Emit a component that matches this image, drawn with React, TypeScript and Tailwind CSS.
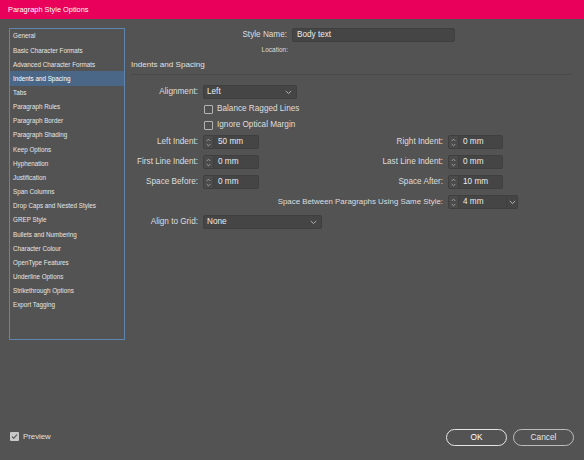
import React from "react";

const FONT = { fontFamily: '"Liberation Sans", Arial, sans-serif' };

const items = [
  "General",
  "Basic Character Formats",
  "Advanced Character Formats",
  "Indents and Spacing",
  "Tabs",
  "Paragraph Rules",
  "Paragraph Border",
  "Paragraph Shading",
  "Keep Options",
  "Hyphenation",
  "Justification",
  "Span Columns",
  "Drop Caps and Nested Styles",
  "GREP Style",
  "Bullets and Numbering",
  "Character Colour",
  "OpenType Features",
  "Underline Options",
  "Strikethrough Options",
  "Export Tagging",
];

function Chevron() {
  return (
    <svg width="7" height="5" viewBox="0 0 7 5" className="shrink-0">
      <path d="M0.8 1 L3.5 3.6 L6.2 1" fill="none" stroke="#bdbdbd" strokeWidth="0.9" />
    </svg>
  );
}

function Spinner({ value, w, dropdown }: { value: string; w: string; dropdown?: boolean }) {
  return (
    <div className={`flex h-[14px] ${w}`}>
      <div className="w-[11px] h-full rounded-l-[2px] border border-[#3f3f3f] bg-[#4b4b4b] flex items-center justify-center">
        <svg width="5" height="9" viewBox="0 0 5 9">
          <path d="M0.7 3 L2.5 1.2 L4.3 3" fill="none" stroke="#b0b0b0" strokeWidth="0.8" />
          <path d="M0.7 6 L2.5 7.8 L4.3 6" fill="none" stroke="#b0b0b0" strokeWidth="0.8" />
        </svg>
      </div>
      <div className="flex-1 h-full rounded-r-[2px] border border-l-0 border-[#3f3f3f] bg-[#454545] flex items-center pl-[4px] text-[8.2px] text-[#ececec]">
        <span className="flex-1">{value}</span>
        {dropdown && (
          <div className="h-full w-[11px] border-l border-[#3f3f3f] flex items-center justify-center">
            <Chevron />
          </div>
        )}
      </div>
    </div>
  );
}

function Dropdown({ value, w }: { value: string; w: string }) {
  return (
    <div className={`h-[14px] ${w} rounded-[2px] border border-[#3f3f3f] bg-[#454545] flex items-center pl-[3px] pr-[4px] text-[8.2px] text-[#ececec]`}>
      <span className="flex-1">{value}</span>
      <Chevron />
    </div>
  );
}

function CheckRow({ label }: { label: string }) {
  return (
    <div className="h-[16px] flex items-center pl-[73px]">
      <div className="w-[9px] h-[9px] border border-[#b4b4b4] rounded-[1px] bg-[#505050]" />
      <span className="ml-[4px] text-[8.2px] text-[#dedede]">{label}</span>
    </div>
  );
}

function Label({ children, w }: { children: React.ReactNode; w: string }) {
  return <div className={`${w} text-right text-[8.2px] text-[#dedede] pr-[5px] whitespace-nowrap`}>{children}</div>;
}

function SpinRow({ l, lv, r, rv }: { l: string; lv: string; r: string; rv: string }) {
  return (
    <div className="h-[14px] flex items-center">
      <Label w="w-[72px]">{l}</Label>
      <Spinner value={lv} w="w-[56px]" />
      <div className="flex-1 text-right text-[8.2px] text-[#dedede] pr-[5px]">{r}</div>
      <Spinner value={rv} w="w-[55px]" />
      <div className="w-[69px]" />
    </div>
  );
}

export default function App() {
  return (
    <div className="w-[584px] h-[460px] bg-[#535353] flex flex-col overflow-hidden select-none" style={FONT}>
      <div className="h-[19px] bg-[#e8005b] flex items-center pl-[8px] text-[7.4px] text-white">
        Paragraph Style Options
      </div>
      <div className="flex flex-1">
        <div className="ml-[9px] mt-[9px] w-[116px] h-[312px] border border-[#5f84ad] bg-[#535353]">
          {items.map((it) => (
            <div
              key={it}
              className={`h-[14.16px] flex items-center pl-[3px] text-[6.3px] ${
                it === "Indents and Spacing" ? "bg-[#4b6787] text-white" : "text-[#e6e6e6]"
              }`}
            >
              {it}
            </div>
          ))}
        </div>
        <div className="flex-1 flex flex-col pl-[6px] pr-[12px]">
          <div className="mt-[9px] h-[14px] flex items-center">
            <Label w="w-[161px]">Style Name:</Label>
            <div className="h-[14px] w-[163px] rounded-[2px] border border-[#3f3f3f] bg-[#454545] flex items-center pl-[4px] text-[8.2px] text-[#ececec]">
              Body text
            </div>
          </div>
          <div className="h-[16px] flex items-center">
            <div className="w-[157px] text-right text-[6.5px] text-[#dcdcdc]">Location:</div>
          </div>
          <div className="h-[14px] flex items-center text-[8.1px] text-[#e0e0e0]">Indents and Spacing</div>
          <div className="mt-[2px] border-t border-[#4a4a4a]" />
          <div className="mt-[10px] h-[14px] flex items-center">
            <Label w="w-[72px]">Alignment:</Label>
            <Dropdown value="Left" w="w-[94px]" />
          </div>
          <div className="mt-[2px]">
            <CheckRow label="Balance Ragged Lines" />
            <CheckRow label="Ignore Optical Margin" />
          </div>
          <div className="mt-[2px] flex flex-col gap-[6px]">
            <SpinRow l="Left Indent:" lv="50 mm" r="Right Indent:" rv="0 mm" />
            <SpinRow l="First Line Indent:" lv="0 mm" r="Last Line Indent:" rv="0 mm" />
            <SpinRow l="Space Before:" lv="0 mm" r="Space After:" rv="10 mm" />
            <div className="h-[14px] flex items-center justify-end pr-[54px]">
              <div className="text-[7.9px] text-[#dedede] pr-[5px]">Space Between Paragraphs Using Same Style:</div>
              <Spinner value="4 mm" w="w-[70px]" dropdown />
            </div>
            <div className="h-[14px] flex items-center">
              <Label w="w-[72px]">Align to Grid:</Label>
              <Dropdown value="None" w="w-[119px]" />
            </div>
          </div>
        </div>
      </div>
      <div className="h-[31px] flex items-start justify-between pl-[10px] pr-[10px]">
        <div className="flex items-center h-[17px] mt-[-1px]">
          <div className="w-[9px] h-[9px] rounded-[1px] bg-[#c8c8c8] flex items-center justify-center">
            <svg width="7" height="7" viewBox="0 0 7 7">
              <path d="M1 3.6 L2.8 5.3 L6 1.5" fill="none" stroke="#4a4a4a" strokeWidth="1.1" />
            </svg>
          </div>
          <span className="ml-[4px] text-[7.8px] text-[#e0e0e0]">Preview</span>
        </div>
        <div className="flex gap-[6px]">
          <div className="w-[61px] h-[17px] rounded-full border-[1.5px] border-[#e6e6e6] flex items-center justify-center text-[8.3px] text-white">
            OK
          </div>
          <div className="w-[61px] h-[17px] rounded-full border border-[#bdbdbd] flex items-center justify-center text-[8.3px] text-[#e6e6e6]">
            Cancel
          </div>
        </div>
      </div>
    </div>
  );
}
